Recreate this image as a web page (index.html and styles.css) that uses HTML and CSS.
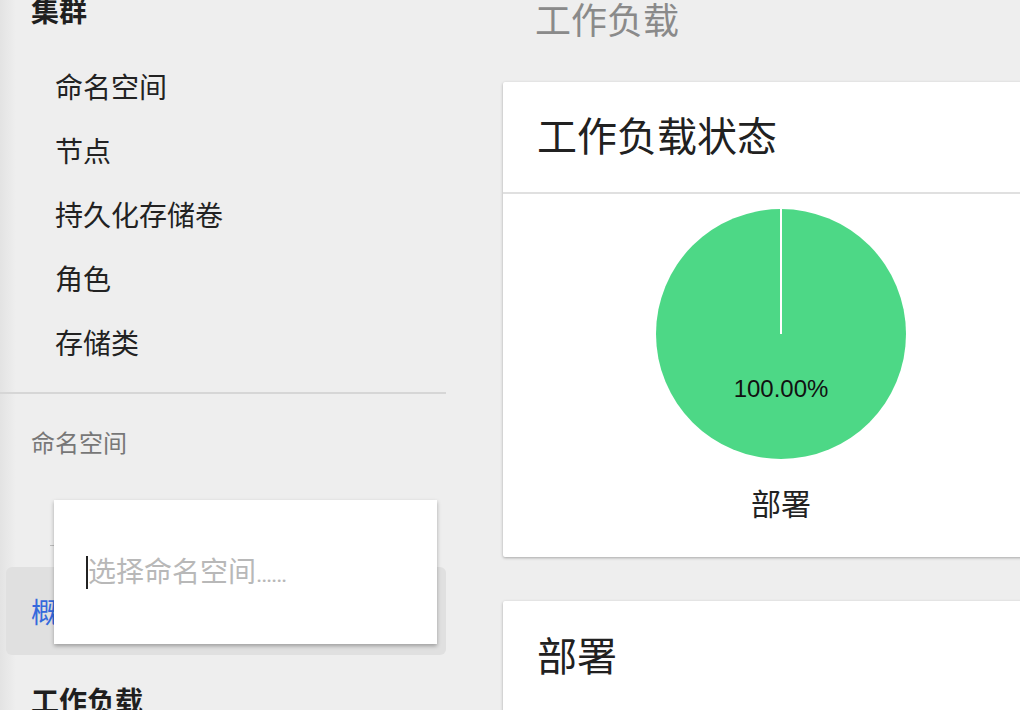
FILE: index.html
```html
<!DOCTYPE html>
<html lang="zh-CN">
<head>
<meta charset="utf-8">
<title>工作负载</title>
<link rel="stylesheet" href="styles.css">
</head>
<body>
<div class="app">
  <aside class="sidebar">
    <div class="group-title">集群</div>
    <ul class="nav-list">
      <li class="nav-item">命名空间</li>
      <li class="nav-item">节点</li>
      <li class="nav-item">持久化存储卷</li>
      <li class="nav-item">角色</li>
      <li class="nav-item">存储类</li>
    </ul>
    <div class="divider"></div>
    <div class="ns-label">命名空间</div>
    <div class="ns-select">
      <span class="ns-value">default</span>
      <div class="ns-dropdown">
        <div class="ns-input"><span class="caret"></span><span class="placeholder">选择命名空间<span class="dots">……</span></span></div>
      </div>
    </div>
    <div class="nav-active">概览</div>
    <div class="group-title group-title-2">工作负载</div>
  </aside>
  <main class="main">
    <h1 class="page-title">工作负载</h1>
    <section class="card">
      <div class="card-header">工作负载状态</div>
      <div class="card-body">
        <svg class="pie" width="250" height="250" viewBox="0 0 250 250">
          <circle cx="125" cy="125" r="125" fill="#4dd886"></circle>
          <line x1="125" y1="0" x2="125" y2="125" stroke="#ffffff" stroke-width="2"></line>
          <text x="125" y="188" text-anchor="middle" class="pie-text">100.00%</text>
        </svg>
        <div class="pie-label">部署</div>
      </div>
    </section>
    <section class="card card-2">
      <div class="card-header card-header-2">部署</div>
    </section>
  </main>
</div>
</body>
</html>
```

FILE: styles.css
```css
html, body {
  margin: 0;
  padding: 0;
  height: 710px;
  overflow: hidden;
  background: #eeeeee;
  font-family: "Noto Sans CJK SC", "Noto Sans", sans-serif;
  color: #212121;
}

.app {
  display: flex;
  width: 1020px;
  height: 710px;
  overflow: hidden;
}

.sidebar {
  width: 446px;
  flex: 0 0 446px;
  background: linear-gradient(to right, #e3e3e3 0px, #eeeeee 16px);
}

.group-title {
  margin-top: -18px;
  height: 56px;
  line-height: 56px;
  padding-left: 31px;
  font-size: 28px;
  font-weight: 700;
  color: #1f1f1f;
}

.group-title-2 {
  margin-top: 17px;
}

.nav-list {
  list-style: none;
  margin: 0;
  padding: 16px 0 18px;
}

.nav-item {
  height: 64px;
  line-height: 64px;
  padding-left: 55px;
  font-size: 28px;
  color: #222222;
}

.divider {
  height: 2px;
  background: #d6d6d6;
}

.ns-label {
  margin-top: 24px;
  height: 48px;
  line-height: 48px;
  padding-left: 31px;
  font-size: 24px;
  color: #777777;
}

.ns-select {
  position: relative;
  margin: 23px 16px 0 50px;
  height: 56px;
  border-bottom: 1px solid #bdbdbd;
}

.ns-value {
  display: block;
  padding-left: 38px;
  line-height: 56px;
  font-size: 26px;
  color: #444;
}

.ns-dropdown {
  position: absolute;
  top: 11px;
  left: 4px;
  width: 383px;
  height: 144px;
  background: #ffffff;
  box-shadow: 0 2px 4px rgba(0, 0, 0, 0.3);
  display: flex;
  align-items: center;
}

.ns-input {
  display: flex;
  align-items: center;
  padding-left: 32px;
}

.caret {
  width: 2px;
  height: 33px;
  background: #222222;
}

.placeholder {
  font-size: 28px;
  color: #b8b8b8;
  line-height: 40px;
}

.dots {
  font-family: "Roboto", "Liberation Sans", sans-serif;
  font-size: 24px;
  letter-spacing: -1px;
}

.nav-active {
  margin: 21px 0 0 6px;
  height: 88px;
  line-height: 88px;
  padding-left: 25px;
  border-radius: 6px;
  background: #e0e0e0;
  font-size: 28px;
  color: #3569dc;
}

.main {
  flex: 1 1 auto;
  padding-left: 57px;
}

.page-title {
  margin: -10px 0 0 0;
  height: 56px;
  line-height: 56px;
  padding-left: 32px;
  font-size: 36px;
  font-weight: 400;
  color: #8a8a8a;
}

.card {
  width: 556px;
  margin-top: 36px;
  background: #ffffff;
  border-radius: 2px;
  box-shadow: 0 1px 3px rgba(0, 0, 0, 0.3);
}

.card-2 {
  margin-top: 44px;
  height: 200px;
}

.card-header {
  height: 104px;
  line-height: 104px;
  padding-bottom: 6px;
  padding-left: 34px;
  font-size: 40px;
  color: #212121;
  border-bottom: 2px solid #e0e0e0;
}

.card-header-2 {
  height: 106px;
  line-height: 106px;
  border-bottom: none;
}

.card-body {
  display: flex;
  flex-direction: column;
  align-items: center;
  padding: 15px 0 31px;
}

.pie {
  display: block;
}

.pie-text {
  font-family: "Liberation Sans", Arial, sans-serif;
  font-size: 24px;
  fill: #111111;
}

.pie-label {
  margin-top: 19px;
  height: 48px;
  line-height: 48px;
  font-size: 30px;
  color: #222222;
}
```
